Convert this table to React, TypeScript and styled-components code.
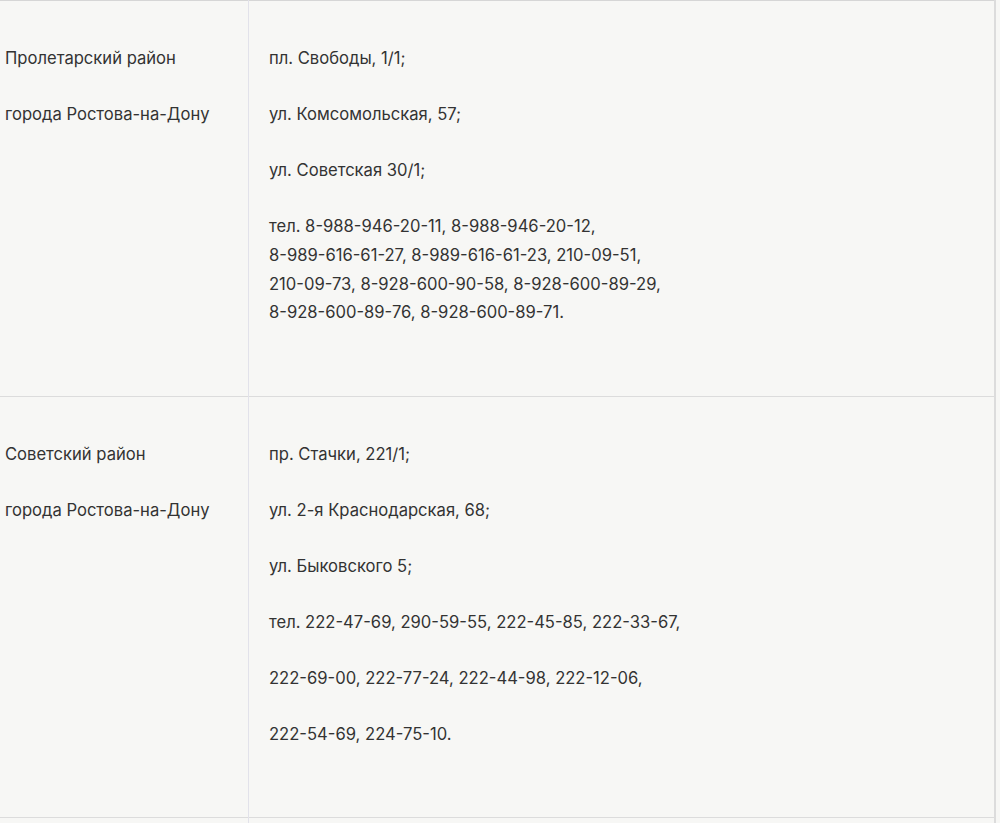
import React from "react";
import styled, { createGlobalStyle } from "styled-components";

const Global = createGlobalStyle`
  html, body { margin: 0; padding: 0; background: #f7f7f5; }
  body { font-family: Inter, "Noto Sans", sans-serif; color: #333; }
`;

const Table = styled.table`
  width: 996px;
  border-collapse: collapse;
  background: #f7f7f5;
  border-top: 1px solid #d6d6d6;
  border-right: 2px solid #dcdcdc;
`;

const Row = styled.tr`
  border-bottom: 1px solid #dcdcdc;
`;

const Cell = styled.td<{ $first?: boolean }>`
  vertical-align: top;
  padding: 16px 0 41.5px ${(p) => (p.$first ? "5px" : "20px")};
  width: ${(p) => (p.$first ? "243px" : "auto")};
  border-right: ${(p) => (p.$first ? "1px solid #e2e2ea" : "none")};
  font-size: 16.6px;
  line-height: 28.6px;
  color: #333;
`;

const P = styled.p`
  margin: 27.4px 0;
`;

type RowData = { left: string[]; right: string[][] };

const data: RowData[] = [
  {
    left: ["Пролетарский район", "города Ростова-на-Дону"],
    right: [
      ["пл. Свободы, 1/1;"],
      ["ул. Комсомольская, 57;"],
      ["ул. Советская 30/1;"],
      [
        "тел. 8-988-946-20-11, 8-988-946-20-12,",
        "8-989-616-61-27, 8-989-616-61-23, 210-09-51,",
        "210-09-73, 8-928-600-90-58, 8-928-600-89-29,",
        "8-928-600-89-76, 8-928-600-89-71.",
      ],
    ],
  },
  {
    left: ["Советский район", "города Ростова-на-Дону"],
    right: [
      ["пр. Стачки, 221/1;"],
      ["ул. 2-я Краснодарская, 68;"],
      ["ул. Быковского 5;"],
      ["тел. 222-47-69, 290-59-55, 222-45-85, 222-33-67,"],
      ["222-69-00, 222-77-24, 222-44-98, 222-12-06,"],
      ["222-54-69, 224-75-10."],
    ],
  },
];

export default function App() {
  return (
    <>
      <Global />
      <Table>
        <tbody>
          {data.map((r, i) => (
            <Row key={i}>
              <Cell $first>
                {r.left.map((t, j) => (
                  <P key={j}>{t}</P>
                ))}
              </Cell>
              <Cell>
                {r.right.map((lines, j) => (
                  <P key={j}>
                    {lines.map((l, k) => (
                      <React.Fragment key={k}>
                        {k > 0 && <br />}
                        {l}
                      </React.Fragment>
                    ))}
                  </P>
                ))}
              </Cell>
            </Row>
          ))}
          <Row>
            <Cell $first>&nbsp;</Cell>
            <Cell>&nbsp;</Cell>
          </Row>
        </tbody>
      </Table>
    </>
  );
}
